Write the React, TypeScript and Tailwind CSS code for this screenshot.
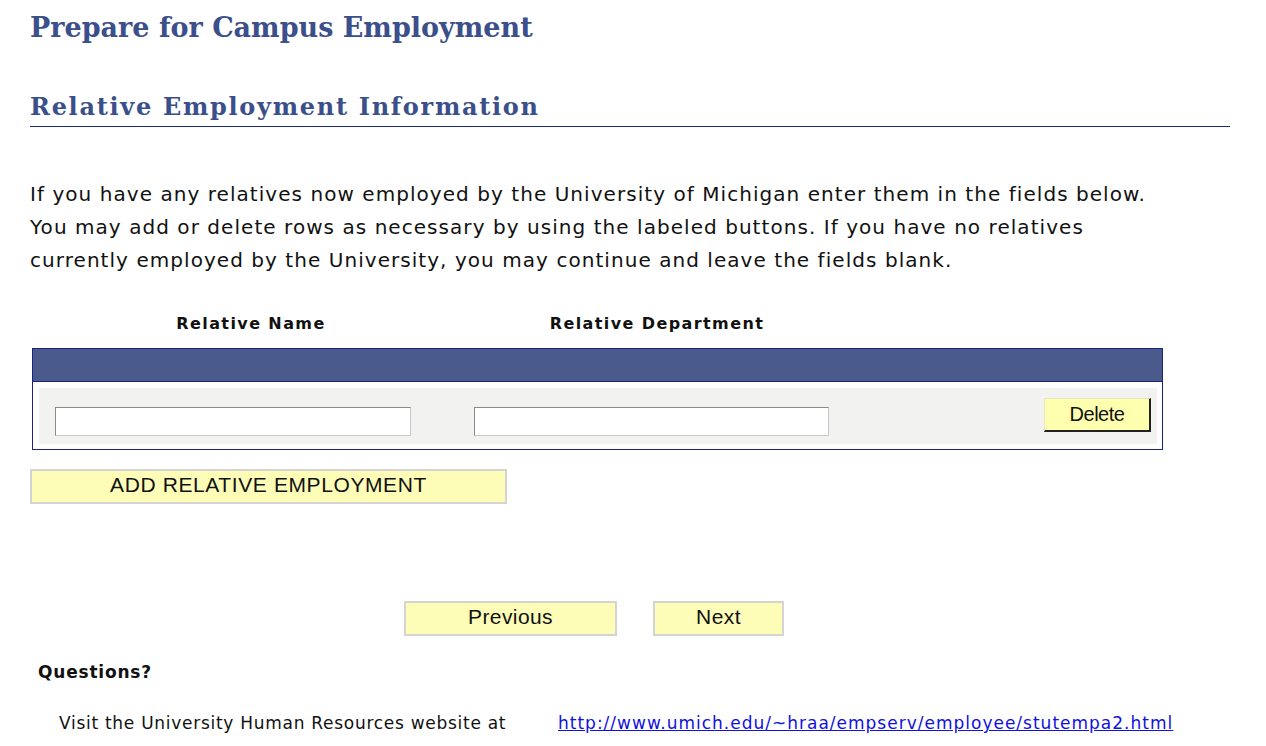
import React from "react";

export default function App() {
  const serif = { fontFamily: "Georgia, 'DejaVu Serif', 'Liberation Serif', serif" };
  const arial = { fontFamily: "'Liberation Sans', Arial, sans-serif" };
  return (
    <div className="w-[1266px] h-[746px] overflow-hidden bg-white relative" style={{ fontFamily: "'DejaVu Sans', Verdana, sans-serif" }}>
      <div className="pl-[30px] pr-[36px]">
        <h1 className="pt-[10px] text-[27px] leading-[36px] font-bold text-[#3b4f8a]" style={serif}>
          Prepare for Campus Employment
        </h1>
        <h2 className="mt-[46px] text-[24px] leading-[30px] font-bold text-[#3b4f8a] tracking-[1.7px]" style={serif}>
          Relative Employment Information
        </h2>
        <div className="mt-[4px] h-[1px] bg-[#1a2a8a]" />
        <p className="mt-[51px] text-[20px] leading-[33px] text-[#111] tracking-[1.05px] whitespace-nowrap">
          If you have any relatives now employed by the University of Michigan enter them in the fields below.
          <br />
          You may add or delete rows as necessary by using the labeled buttons. If you have no relatives
          <br />
          currently employed by the University, you may continue and leave the fields blank.
        </p>
        <div className="mt-[37px] flex text-[16px] font-bold text-[#111] leading-[20px] tracking-[1.4px]">
          <div className="w-[442px] text-center">Relative Name</div>
          <div className="w-[370px] text-center">Relative Department</div>
        </div>
        <div className="mt-[14px] ml-[2px] w-[1131px] border border-[#1a237e] bg-white">
          <div className="h-[33px] bg-[#4a5a8a] border-b border-[#1a237e]" />
          <div className="pl-[6px] pr-[5px] pt-[6px] pb-[5px]">
            <div className="h-[56px] bg-[#f2f2f0] flex items-start pl-[16px] pr-[6px]">
              <input className="mt-[19px] w-[356px] h-[29px] bg-white border border-t-[#8a8a8a] border-l-[#8a8a8a] border-r-[#c8c8c8] border-b-[#c8c8c8]" />
              <input className="mt-[19px] ml-[63px] w-[355px] h-[29px] bg-white border border-t-[#8a8a8a] border-l-[#8a8a8a] border-r-[#c8c8c8] border-b-[#c8c8c8]" />
              <button
                className="mt-[10px] ml-auto w-[107px] h-[34px] pb-[2px] bg-[#ffffb0] border border-t-[#e8e8c0] border-l-[#e8e8c0] border-r-2 border-b-2 border-r-[#222] border-b-[#222] text-[20px] text-[#111] leading-[26px] tracking-[-0.5px]"
                style={arial}
              >
                Delete
              </button>
            </div>
          </div>
        </div>
        <button
          className="mt-[19px] w-[477px] h-[35px] pb-[3px] bg-[#fdfdb8] border-2 border-[#d4d4d4] text-[21px] text-[#111] leading-[28px] tracking-[0.6px] flex items-center justify-center"
          style={arial}
        >
          ADD RELATIVE EMPLOYMENT
        </button>
        <div className="mt-[97px] flex" style={arial}>
          <button className="ml-[374px] w-[213px] h-[35px] pb-[3px] bg-[#fdfdb8] border-2 border-[#d4d4d4] text-[21px] text-[#111] leading-[28px] tracking-[0.4px]">
            Previous
          </button>
          <button className="ml-[36px] w-[131px] h-[35px] pb-[3px] bg-[#fdfdb8] border-2 border-[#d4d4d4] text-[21px] text-[#111] leading-[28px] tracking-[0.4px]">
            Next
          </button>
        </div>
        <div className="mt-[25px] ml-[8px] text-[17px] font-bold text-[#111] leading-[22px] tracking-[0.8px]">Questions?</div>
        <div className="mt-[29px] flex text-[17px] leading-[22px] text-[#111]">
          <span className="ml-[29px] w-[499px] tracking-[0.72px]">Visit the University Human Resources website at</span>
          <a href="#" className="text-[#1010e0] underline tracking-[1px]">http://www.umich.edu/~hraa/empserv/employee/stutempa2.html</a>
        </div>
      </div>
    </div>
  );
}
